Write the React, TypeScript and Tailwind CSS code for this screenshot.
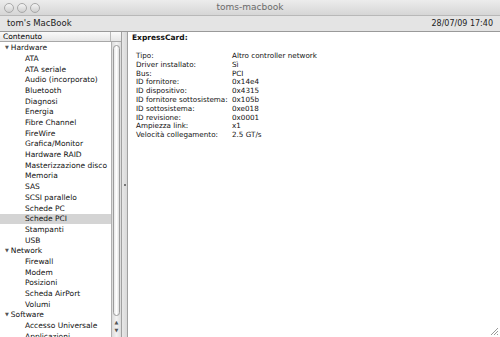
import React from "react"

const tree: { label: string; items: string[] }[] = [
  {
    label: "Hardware",
    items: [
      "ATA",
      "ATA seriale",
      "Audio (incorporato)",
      "Bluetooth",
      "Diagnosi",
      "Energia",
      "Fibre Channel",
      "FireWire",
      "Grafica/Monitor",
      "Hardware RAID",
      "Masterizzazione disco",
      "Memoria",
      "SAS",
      "SCSI parallelo",
      "Schede PC",
      "Schede PCI",
      "Stampanti",
      "USB",
    ],
  },
  { label: "Network", items: ["Firewall", "Modem", "Posizioni", "Scheda AirPort", "Volumi"] },
  { label: "Software", items: ["Accesso Universale", "Applicazioni"] },
]

const details: [string, string][] = [
  ["Tipo:", "Altro controller network"],
  ["Driver installato:", "Sì"],
  ["Bus:", "PCI"],
  ["ID fornitore:", "0x14e4"],
  ["ID dispositivo:", "0x4315"],
  ["ID fornitore sottosistema:", "0x105b"],
  ["ID sottosistema:", "0xe018"],
  ["ID revisione:", "0x0001"],
  ["Ampiezza link:", "x1"],
  ["Velocità collegamento:", "2.5 GT/s"],
]

function Light() {
  return (
    <span className="w-[10px] h-[10px] rounded-full border border-[#a8a8a8] bg-gradient-to-b from-[#f4f4f4] to-[#cfcfcf]" />
  )
}

export default function App() {
  const selected = "Schede PCI"

  return (
    <div
      className="w-[500px] h-[337px] flex flex-col overflow-hidden bg-white text-black"
      style={{ fontFamily: '"DejaVu Sans", "Liberation Sans", sans-serif' }}
    >
      {/* title bar */}
      <div className="h-[15px] grid grid-cols-[1fr_auto_1fr] items-center px-[4px] bg-gradient-to-b from-[#ececec] to-[#d6d6d6]">
        <div className="flex gap-[3px] items-center">
          <Light />
          <Light />
          <Light />
        </div>
        <div className="text-[9px] text-[#6a6a6a] leading-none">toms-macbook</div>
        <div />
      </div>

      {/* info bar */}
      <div className="h-[17px] flex items-center justify-between px-[7px] bg-[#e4e4e4] border-t border-[#b8b8b8] border-b border-b-[#9a9a9a] text-[#222]">
        <span className="text-[8.5px]">tom's MacBook</span>
        <span className="text-[8px]">28/07/09 17:40</span>
      </div>

      <div className="flex-1 flex min-h-0">
        {/* left pane */}
        <div className="w-[122px] flex flex-col border-r border-[#a0a0a0]">
          <div className="h-[10px] flex bg-gradient-to-b from-[#fafafa] to-[#e6e6e6] border-b border-[#a8a8a8] text-[7.5px] leading-none">
            <div className="w-[111px] px-[3px] flex items-center border-r border-[#b8b8b8]">Contenuto</div>
            <div className="flex-1" />
          </div>
          <div className="flex-1 flex min-h-0">
            <div className="w-[111px] pt-[0.5px] text-[7.5px] text-[#111] overflow-hidden">
              {tree.map((group) => (
                <div key={group.label}>
                  <div className="h-[10.7px] flex items-center pl-[5px]">
                    <span className="text-[5px] text-[#555] mr-[2px]">▼</span>
                    <span>{group.label}</span>
                  </div>
                  {group.items.map((item) => (
                    <div
                      key={item}
                      className={`h-[10.7px] flex items-center pl-[25px] whitespace-nowrap ${
                        item === selected ? "bg-[#d4d4d4]" : ""
                      }`}
                    >
                      {item}
                    </div>
                  ))}
                </div>
              ))}
            </div>
            {/* scrollbar */}
            <div className="flex-1 flex flex-col border-l border-[#b0b0b0] bg-gradient-to-r from-[#dcdcdc] via-[#f2f2f2] to-[#dcdcdc] px-[1px] pt-[3px]">
              <div className="h-[271px] rounded-full border border-[#9c9c9c] bg-gradient-to-r from-[#e8e8e8] via-[#ffffff] to-[#e0e0e0]" />
              <div className="flex-1 flex flex-col items-center justify-center gap-[3px] text-[5px] text-[#555] leading-none">
                <span>▲</span>
                <span>▼</span>
              </div>
            </div>
          </div>
        </div>

        {/* splitter */}
        <div className="w-[6px] flex items-center justify-center bg-gradient-to-r from-[#e8e8e8] to-[#d8d8d8] border-r border-[#a0a0a0]">
          <span className="w-[2px] h-[2px] bg-[#555] rounded-full" />
        </div>

        {/* right pane */}
        <div className="flex-1 relative pl-[4px] pt-[1px] text-[7.2px] text-[#111]">
          <div className="font-bold text-[7.5px] leading-[9px]">ExpressCard:</div>
          <div className="pl-[4px] pt-[10px]">
            {details.map(([k, v]) => (
              <div key={k} className="flex leading-[8.8px]">
                <span className="w-[96px] shrink-0 whitespace-nowrap">{k}</span>
                <span>{v}</span>
              </div>
            ))}
          </div>
          <svg className="absolute right-[1px] bottom-[1px]" width="10" height="10" viewBox="0 0 10 10">
            <path d="M9 2 L2 9 M9 5 L5 9 M9 8 L8 9" stroke="#9a9a9a" strokeWidth="1" />
          </svg>
        </div>
      </div>
    </div>
  )
}
